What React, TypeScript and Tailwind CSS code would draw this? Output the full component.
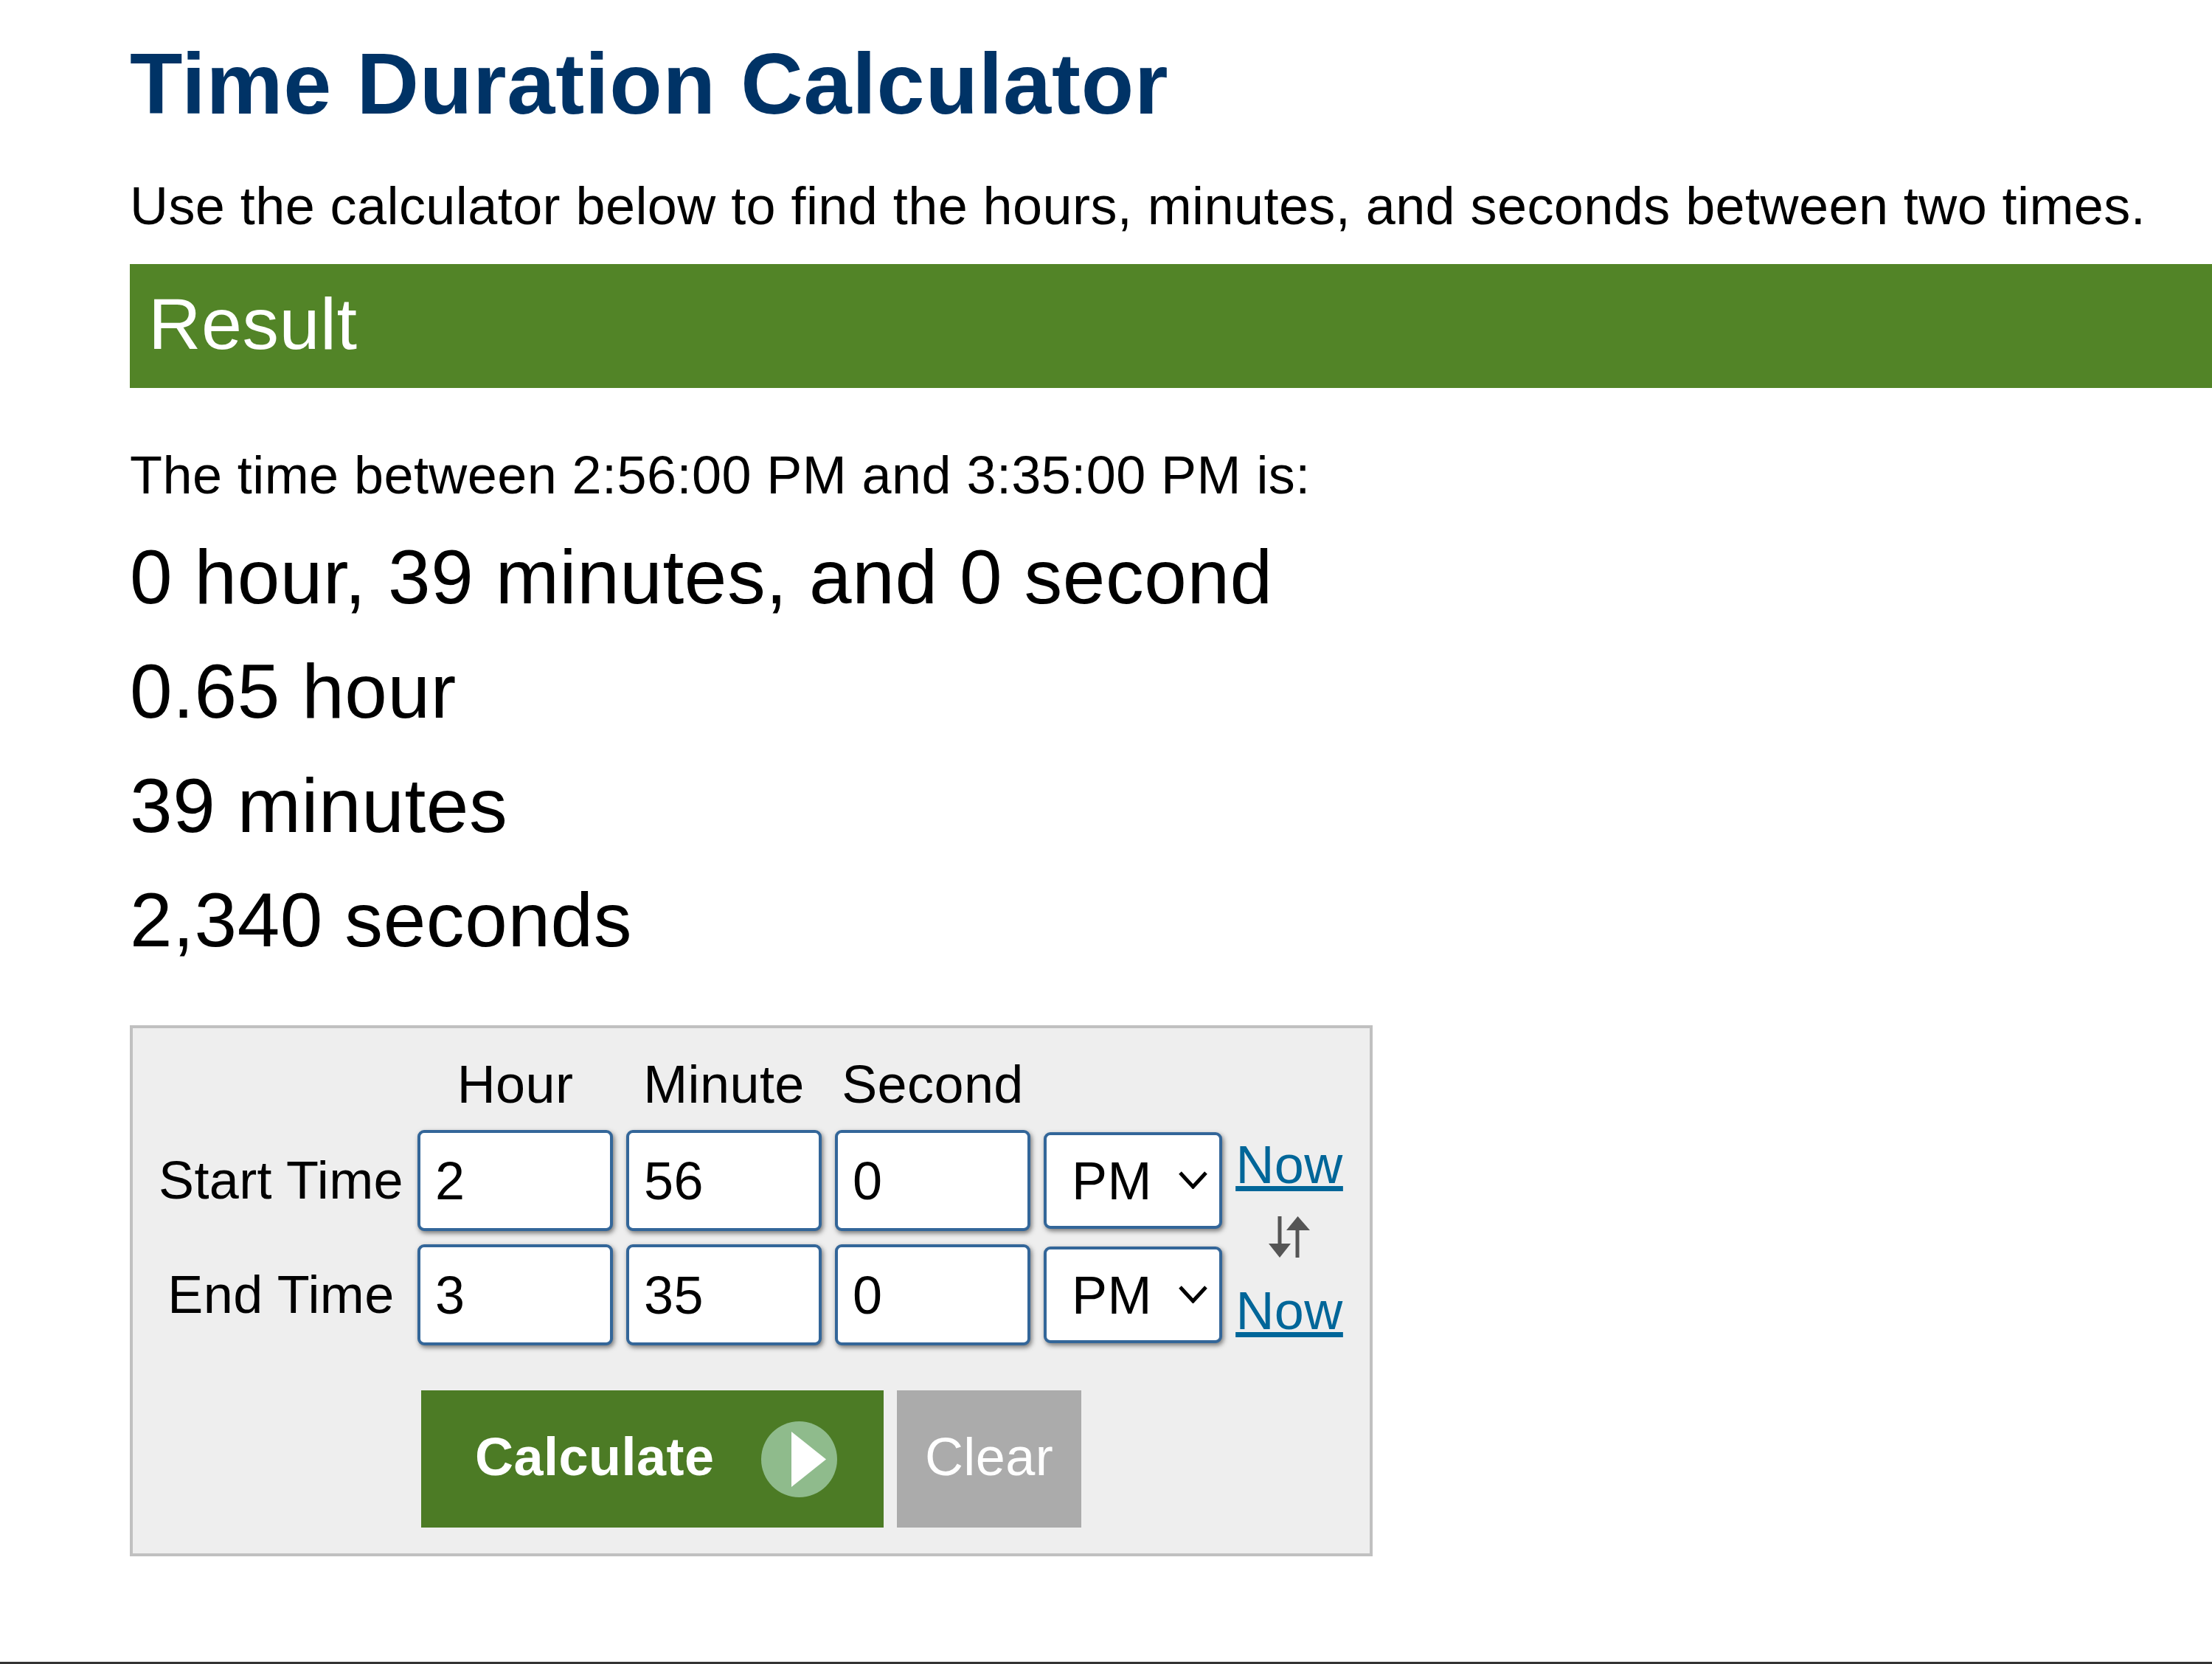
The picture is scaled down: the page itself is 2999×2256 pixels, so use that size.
import React from "react";

const inputCls =
  "w-[265px] h-[137px] rounded-[9px] border-[4px] border-[#336699] bg-white pl-[20px] text-[72px] tracking-[0.4px] text-black shadow-[2px_3px_6px_#777777] outline-none font-['Liberation_Sans',sans-serif]";

function Ampm() {
  return (
    <div className="relative self-center w-[242px] h-[131px]">
      <select
        defaultValue="PM"
        className="w-full h-full appearance-none rounded-[9px] border-[4px] border-[#336699] bg-white pl-[34px] text-[72px] tracking-[0.4px] text-black shadow-[2px_3px_6px_#777777] outline-none font-['Liberation_Sans',sans-serif]"
      >
        <option>AM</option>
        <option>PM</option>
      </select>
      <svg className="absolute left-[183px] top-[53px] w-[39px] h-[24px]" viewBox="0 0 39 24" fill="none">
        <path d="M2 2 L19.5 21 L37 2" stroke="#000" strokeWidth="5" />
      </svg>
    </div>
  );
}

function TimeRow({ label, h, m }: { label: string; h: string; m: string }) {
  return (
    <>
      <div className="pl-[3px] text-center text-[72px] tracking-[0.4px] leading-[137px] h-[137px] whitespace-nowrap">{label}</div>
      <input className={inputCls} value={h} readOnly />
      <input className={inputCls} value={m} readOnly />
      <input className={inputCls} value="0" readOnly />
      <Ampm />
    </>
  );
}

export default function App() {
  return (
    <div className="h-[2256px] w-full overflow-hidden bg-white text-black font-['Liberation_Sans',sans-serif] flex flex-col">
      <div className="pl-[176px] pt-[49px] flex-1">
        <h1 className="text-[117px] tracking-[0.8px] leading-[130px] font-bold text-[#003366] whitespace-nowrap">Time Duration Calculator</h1>
        <p className="mt-[55px] text-[72px] tracking-[0.43px] leading-[90px] whitespace-nowrap">
          Use the calculator below to find the hours, minutes, and seconds between two times.
        </p>
        <h2 className="mt-[34px] h-[168px] bg-[#528427] pl-[25px] text-[99px] tracking-[0.5px] leading-[162px] text-white">Result</h2>
        <p className="mt-[73px] text-[72px] tracking-[0.43px] leading-[90px]">The time between 2:56:00 PM and 3:35:00 PM is:</p>
        <div className="mt-[16px] text-[103.5px] tracking-[0.6px] leading-[155px]">
          <div>0 hour, 39 minutes, and 0 second</div>
          <div>0.65 hour</div>
          <div>39 minutes</div>
          <div>2,340 seconds</div>
        </div>
        <div className="mt-[65px] w-[1685px] border-[4px] border-[#c0c0c0] bg-[#eeeeee] pt-[36px] pb-[35px] pl-[31px]">
          <div className="grid grid-cols-[337px_265px_265px_265px_242px_146px] gap-x-[18px] gap-y-[18px]">
            <div />
            <div className="text-center text-[72px] tracking-[0.4px] leading-[80px] h-[84px]">Hour</div>
            <div className="text-center text-[72px] tracking-[0.4px] leading-[80px] h-[84px]">Minute</div>
            <div className="text-center text-[72px] tracking-[0.4px] leading-[80px] h-[84px]">Second</div>
            <div />
            <div />
            <TimeRow label="Start Time" h="2" m="56" />
            <div className="row-span-2 flex flex-col items-center justify-between pt-[2px] pb-[2px] text-[72px] tracking-[0.4px] leading-[90px] text-[#006699] underline">
              <a href="#">Now</a>
              <svg className="w-[56px] h-[58px] -mt-[2px]" viewBox="0 0 56 56" fill="#555555">
                <rect x="12.5" y="0" width="5" height="40" />
                <path d="M0 37 H30 L15 56 Z" />
                <rect x="36.5" y="16" width="5" height="40" />
                <path d="M24 19 H56 L39.5 0 Z" />
              </svg>
              <a href="#">Now</a>
            </div>
            <TimeRow label="End Time" h="3" m="35" />
          </div>
          <div className="mt-[61px] ml-[360px] flex gap-[18px]">
            <button className="flex h-[186px] w-[627px] items-center bg-[#4c7b25] pl-[73px] pb-[6px] text-[72px] tracking-[0.5px] font-bold text-white">
              <span>Calculate</span>
              <svg className="ml-[63px] mt-[6px] w-[103px] h-[103px]" viewBox="0 0 103 103">
                <circle cx="51.5" cy="51.5" r="51.5" fill="#8fbb8c" />
                <path d="M41 14 L88 51.5 L41 89 Z" fill="#ffffff" />
              </svg>
            </button>
            <button className="h-[186px] w-[250px] bg-[#ababab] pb-[6px] text-center text-[72px] tracking-[0.4px] text-white">Clear</button>
          </div>
        </div>
      </div>
      <div className="h-[3px] bg-[#333333]" />
    </div>
  );
}
